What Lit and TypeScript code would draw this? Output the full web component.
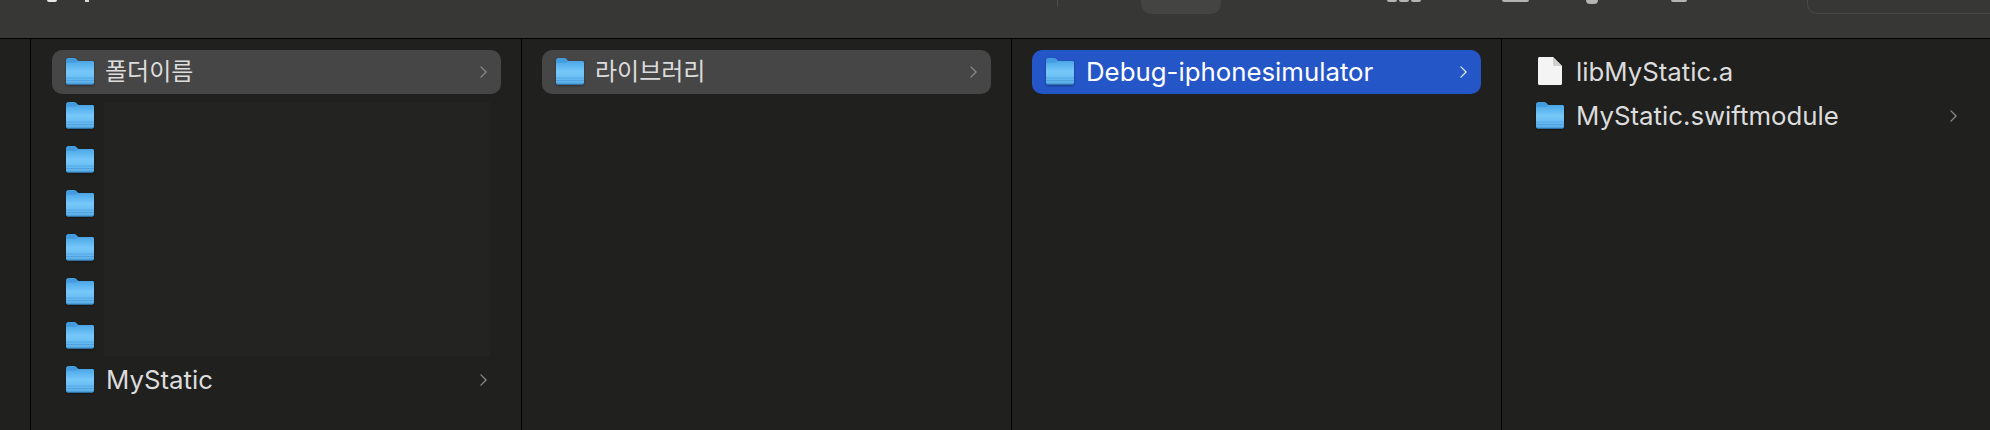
import { LitElement, html, css, svg } from "lit";
import { customElement } from "lit/decorators.js";

const folder = (id: string) => html`<svg class="folder" viewBox="0 0 28 28" preserveAspectRatio="none" aria-hidden="true">
  ${svg`<defs>
    <linearGradient id="f${id}" x1="0" y1="0" x2="0" y2="1">
      <stop offset="0" stop-color="#4fa8e8"/>
      <stop offset="0.22" stop-color="#5fb8f1"/>
      <stop offset="0.45" stop-color="#76c8f9"/>
      <stop offset="0.75" stop-color="#68bcf3"/>
      <stop offset="1" stop-color="#55a9e4"/>
    </linearGradient>
  </defs>
  <path d="M0 2.500C0 1 .9 0 2.300 0h5.800c1 0 1.600.4 2.300 1.100l1.400 1.400c.5.5 1 .7 1.700.7h12.700C27.200 3.200 28 4 28 5.200V10H0z" fill="#439cdd"/>
  <path d="M0 6.300C0 5.400.7 4.800 1.600 4.800h7.600c.8 0 1.300-.2 1.900-.7L12 3.400h14.400c.9 0 1.600.7 1.600 1.600v20.300c0 1.400-.9 2.300-2.300 2.300H2.300C.9 27.600 0 26.700 0 25.300z" fill="url(#f${id})"/>
  <rect y="20.300" width="28" height="1" fill="#4a9bd8" opacity=".7"/>
  <rect y="22.800" width="28" height="1" fill="#4a9bd8" opacity=".7"/>
  <path d="M0 25.300v.2c0 1.300.9 2.200 2.300 2.200h23.400c1.400 0 2.300-.9 2.300-2.200v-.2c0 1-.9 1.500-2.300 1.500H2.300C.9 26.800 0 26.300 0 25.300z" fill="#2f74ad"/>`}
</svg>`;

const chevron = html`<svg class="chev" viewBox="0 0 8 14" aria-hidden="true">
  <path d="M1 1l6 6-6 6" fill="none" stroke="currentColor" stroke-width="1.500" stroke-linecap="round" stroke-linejoin="round"/>
</svg>`;

const fileIcon = html`<svg class="file" viewBox="0 0 24 28" aria-hidden="true">
  <path d="M1.500 0H15l9 9v17.500c0 .9-.6 1.500-1.500 1.500h-21C.6 28 0 27.400 0 26.500v-25C0 .6.6 0 1.500 0z" fill="#f4f4f4"/>
  <path d="M15 0l9 9h-7.500c-.9 0-1.500-.6-1.500-1.500z" fill="#d0d0d0"/>
</svg>`;

@customElement("app-root")
export class AppRoot extends LitElement {
  static styles = css`
    :host {
      display: block;
      width: 1990px;
      height: 430px;
      overflow: hidden;
      background: #20201f;
      font-family: Inter, "Noto Sans CJK KR", "Liberation Sans", sans-serif;
    }
    .toolbar {
      height: 38px;
      background: #373736;
      border-bottom: 1px solid #000;
      display: flex;
      align-items: flex-start;
      overflow: hidden;
    }
    .frag { flex: none; background: #d8d8d8; }
    .t1 { width: 10px; height: 2px; margin-left: 47px; border-radius: 0 0 5px 5px; background: #e8e8e8; }
    .t2 { width: 4px; height: 2px; margin-left: 28px; background: #d8d8d8; }
    .tick { width: 1px; height: 6px; margin-left: 968px; background: #4d4d4c; }
    .pill { width: 80px; height: 14px; margin-left: 83px; background: #444443; border-radius: 0 0 10px 10px; }
    .dots { display: flex; gap: 2px; margin-left: 166px; flex: none; }
    .dots i { width: 10px; height: 2px; background: #b4b4b4; border-radius: 0 0 3px 3px; }
    .bar { width: 27px; height: 2px; margin-left: 81px; background: #b4b4b4; border-radius: 0 0 3px 3px; }
    .pin { width: 12px; height: 4px; margin-left: 57px; background: #b4b4b4; border-radius: 0 0 6px 6px; }
    .ring { width: 16px; height: 2px; margin-left: 73px; background: #b4b4b4; border-radius: 0 0 8px 8px; }
    .search {
      flex: 1;
      height: 13px;
      margin-left: 120px;
      border: 1px solid #484847;
      border-top: 0;
      border-right: 0;
      border-radius: 0 0 0 10px;
    }
    .columns { display: flex; height: 391px; }
    .lead { width: 30px; flex: none; border-right: 1px solid #000; }
    .col {
      position: relative;
      flex: none;
      width: 449px;
      border-right: 1px solid #000;
      padding: 11px 20px 0 20px;
    }
    .col.first { padding-left: 21px; }
    .col.last { border-right: 0; }
    .row {
      height: 44px;
      display: flex;
      align-items: center;
      border-radius: 10px;
      padding: 0 14px;
      color: #dcdcdc;
      font-size: 25.8px;
      box-sizing: border-box;
    }
    .row.gray { background: #464646; }
    .row.blue { background: #2556c8; color: #fff; }
    .folder { width: 28px; height: 27px; flex: none; margin-right: 12px; margin-top: -2px; filter: drop-shadow(0 1px 1px rgba(0,0,0,.35)); }
    .file { width: 24px; height: 28px; flex: none; margin: -2px 14px 0 2px; }
    .name { flex: 1; white-space: nowrap; margin-top: -2px; }
    .ko { font-family: "Noto Sans CJK KR", sans-serif; font-size: 24px; margin: -5px 0 0 -1px; }
    .chev { width: 7px; height: 12px; flex: none; color: #8a8a8a; margin-right: 0; }
    .blue .chev { color: #dfe6f7; }
    .cover {
      position: absolute;
      left: 73px;
      top: 63px;
      width: 386px;
      height: 254px;
      background: #232322;
    }
  `;

  render() {
    const blanks = [1, 2, 3, 4, 5, 6];
    return html`
      <div class="toolbar">
        <span class="frag t1"></span>
        <span class="frag t2"></span>
        <span class="frag tick"></span>
        <span class="frag pill"></span>
        <span class="dots"><i></i><i></i><i></i></span>
        <span class="frag bar"></span>
        <span class="frag pin"></span>
        <span class="frag ring"></span>
        <span class="search"></span>
      </div>
      <div class="columns">
        <div class="lead"></div>
        <div class="col first">
          <div class="row gray">${folder("a")}<span class="name ko">폴더이름</span>${chevron}</div>
          ${blanks.map((n) => html`<div class="row">${folder("b" + n)}<span class="name"></span></div>`)}
          <div class="row">${folder("c")}<span class="name">MyStatic</span>${chevron}</div>
          <div class="cover"></div>
        </div>
        <div class="col">
          <div class="row gray">${folder("d")}<span class="name ko">라이브러리</span>${chevron}</div>
        </div>
        <div class="col">
          <div class="row blue">${folder("e")}<span class="name">Debug-iphonesimulator</span>${chevron}</div>
        </div>
        <div class="col last">
          <div class="row">${fileIcon}<span class="name">libMyStatic.a</span></div>
          <div class="row">${folder("g")}<span class="name">MyStatic.swiftmodule</span>${chevron}</div>
        </div>
      </div>
    `;
  }
}
